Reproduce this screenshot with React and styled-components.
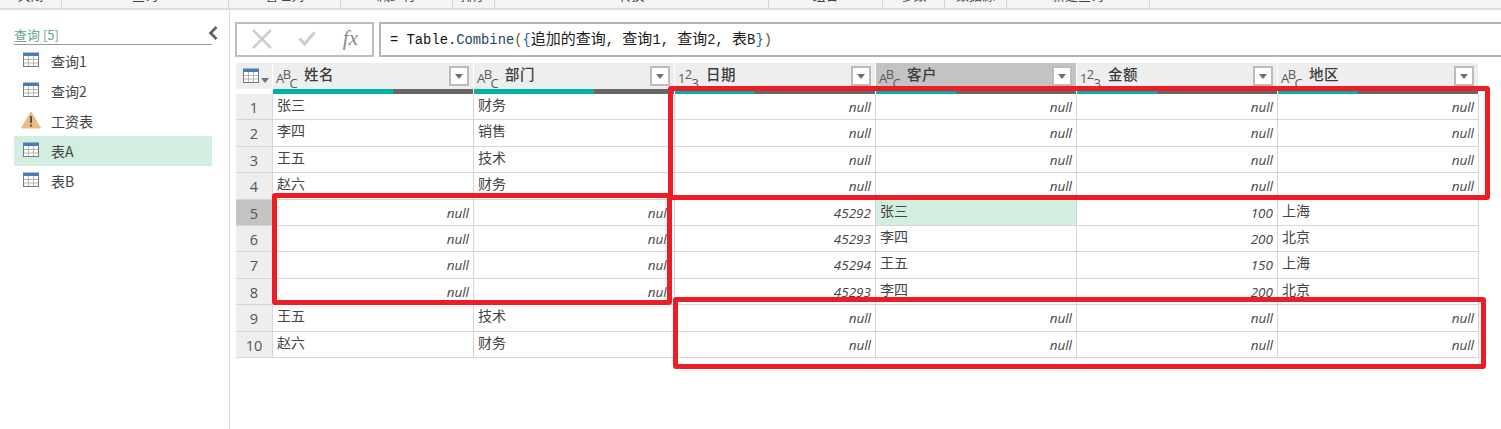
import React from 'react';
import styled, { createGlobalStyle } from 'styled-components';

const GlobalStyle = createGlobalStyle`
    html, body {
        margin: 0;
        padding: 0;
        background: #fff;
        overflow: hidden;
    }
    body {
        font-family: "Noto Sans CJK SC", "Liberation Sans", sans-serif;
        color: #444;
    }
`;

const ribbonGroups = [
    { label: '关闭', width: 62 },
    { label: '查询', width: 167 },
    { label: '管理列', width: 112 },
    { label: '减少行', width: 112 },
    { label: '排序', width: 42 },
    { label: '转换', width: 274 },
    { label: '组合', width: 114 },
    { label: '参数', width: 62 },
    { label: '数据源', width: 62 },
    { label: '新建查询', width: 143 },
];

const queries = [
    { name: '查询1', icon: 'table' },
    { name: '查询2', icon: 'table' },
    { name: '工资表', icon: 'warn' },
    { name: '表A', icon: 'table', active: true },
    { name: '表B', icon: 'table' },
];

const columns = [
    { title: '姓名', type: 'abc', fill: 120 },
    { title: '部门', type: 'abc', fill: 120 },
    { title: '日期', type: 'num', fill: 80 },
    { title: '客户', type: 'abc', fill: 80, selected: true },
    { title: '金额', type: 'num', fill: 80 },
    { title: '地区', type: 'abc', fill: 80 },
];

const n = null;
const rows = [
    ['张三', '财务', n, n, n, n],
    ['李四', '销售', n, n, n, n],
    ['王五', '技术', n, n, n, n],
    ['赵六', '财务', n, n, n, n],
    [n, n, 45292, '张三', 100, '上海'],
    [n, n, 45293, '李四', 200, '北京'],
    [n, n, 45294, '王五', 150, '上海'],
    [n, n, 45293, '李四', 200, '北京'],
    ['王五', '技术', n, n, n, n],
    ['赵六', '财务', n, n, n, n],
];

const TableIcon = ({ size = 16 }) => (
    <svg width={size} height={size} viewBox="0 0 16 16" fill="none">
        <rect x="0.5" y="1.5" width="15" height="13" fill="#fff" stroke="#7a7a7a" />
        <path d="M0 0.5h16v3.5H0z" fill="#4a7db8" />
        <path d="M5.5 4v10M10.5 4v10M1 7.5h14M1 11h14" stroke="#b5b5b5" />
    </svg>
);

const WarnIcon = () => (
    <svg width="20" height="18" viewBox="0 0 20 18">
        <path d="M10 1 L19.5 17 H0.5 Z" fill="#e8bd82" stroke="#e8bd82" strokeLinejoin="round" />
        <path d="M9 5h2v7H9z M9 13.5h2v2H9z" fill="#5c5248" />
    </svg>
);

const CollapseIcon = () => (
    <svg width="10" height="14" viewBox="0 0 10 14" fill="none">
        <path d="M8.5 1 L2.5 7 L8.5 13" stroke="#606060" strokeWidth="2.6" />
    </svg>
);

const CrossIcon = () => (
    <svg width="20" height="20" viewBox="0 0 20 20" fill="none">
        <path d="M1 1 L19 19 M19 1 L1 19" stroke="#cdcdcd" strokeWidth="2.6" />
    </svg>
);

const CheckIcon = () => (
    <svg width="18" height="15" viewBox="0 0 18 15" fill="none">
        <path d="M1.5 7.5 L6.5 13 L16.5 1.5" stroke="#cdcdcd" strokeWidth="3" />
    </svg>
);

const Caret = () => (
    <svg width="8" height="5" viewBox="0 0 8 5">
        <path d="M0 0h8L4 5z" fill="#707070" />
    </svg>
);

const TypeIcon = ({ type }) => {
    const glyphs = type === 'abc' ? ['A', 'B', 'C'] : ['1', '2', '3'];
    return (
        <TypeBadge>
            <TypeGlyph $place="center">{glyphs[0]}</TypeGlyph>
            <TypeGlyph $place="flex-start">{glyphs[1]}</TypeGlyph>
            <TypeGlyph $place="flex-end">{glyphs[2]}</TypeGlyph>
        </TypeBadge>
    );
};

const App = () => {
    return (
        <Page>
            <GlobalStyle />
            <Ribbon>
                {ribbonGroups.map((group) => (
                    <RibbonGroup key={group.label} $width={group.width}>
                        {group.label}
                    </RibbonGroup>
                ))}
            </Ribbon>
            <Body>
                <Sidebar>
                    <SideHead>
                        <SideTitle>查询 [5]</SideTitle>
                        <CollapseIcon />
                    </SideHead>
                    <QueryList>
                        {queries.map((query) => (
                            <QueryItem key={query.name} $active={query.active}>
                                <QueryIcon>
                                    {query.icon === 'warn' ? <WarnIcon /> : <TableIcon />}
                                </QueryIcon>
                                {query.name}
                            </QueryItem>
                        ))}
                    </QueryList>
                </Sidebar>
                <Main>
                    <FormulaRow>
                        <FormulaTools>
                            <CrossIcon />
                            <CheckIcon />
                            <FxMark>fx</FxMark>
                        </FormulaTools>
                        <FormulaInput>
                            = <Dark>Table</Dark>.<Fn>Combine</Fn>
                            <Paren>(</Paren>
                            <Brace>{'{'}</Brace>
                            <Cjk>追加的查询</Cjk>, <Cjk>查询</Cjk>1, <Cjk>查询</Cjk>2, <Cjk>表</Cjk>B
                            <Brace>{'}'}</Brace>
                            <Paren>)</Paren>
                        </FormulaInput>
                    </FormulaRow>
                    <TableWrap>
                        <HeaderRow>
                            <CornerCell>
                                <TableIcon />
                                <Caret />
                            </CornerCell>
                            {columns.map((col) => (
                                <HeaderCell key={col.title} $selected={col.selected}>
                                    <HeaderTop>
                                        <TypeIcon type={col.type} />
                                        <HeaderTitle>{col.title}</HeaderTitle>
                                        <FilterButton>
                                            <Caret />
                                        </FilterButton>
                                    </HeaderTop>
                                    <QualityBar>
                                        <QualityFill $width={col.fill} />
                                    </QualityBar>
                                </HeaderCell>
                            ))}
                        </HeaderRow>
                        {rows.map((row, i) => (
                            <DataRow key={i}>
                                <RowNumber $selected={i === 4}>{i + 1}</RowNumber>
                                {row.map((value, j) =>
                                    typeof value === 'string' ? (
                                        <TextCell key={j} $selected={i === 4 && j === 3}>
                                            {value}
                                        </TextCell>
                                    ) : (
                                        <ValueCell key={j}>{value === null ? 'null' : value}</ValueCell>
                                    )
                                )}
                            </DataRow>
                        ))}
                        <Frame $left={432} $top={23} $width={822} $height={114} />
                        <Frame $left={36} $top={130} $width={400} $height={112} />
                        <Frame $left={437} $top={234} $width={813} $height={72} />
                    </TableWrap>
                </Main>
            </Body>
        </Page>
    );
};

export default App;

const Page = styled.div`
    width: 1501px;
    height: 429px;
    display: flex;
    flex-direction: column;
    overflow: hidden;
`;

const Ribbon = styled.div`
    height: 8px;
    flex: none;
    display: flex;
    background: #f5f4f5;
    border-bottom: 2px solid #dcdcdc;
    overflow: hidden;
`;
const RibbonGroup = styled.div`
    width: ${(p) => p.$width}px;
    flex: none;
    height: 8px;
    display: flex;
    align-items: flex-end;
    justify-content: center;
    padding-bottom: 4px;
    box-sizing: border-box;
    border-right: 1px solid #d4d4d4;
    font-size: 13px;
    line-height: 18px;
    color: #444;
`;

const Body = styled.div`
    flex: 1;
    display: flex;
    min-height: 0;
`;

const Sidebar = styled.aside`
    width: 230px;
    flex: none;
    box-sizing: border-box;
    border-right: 1px solid #d9d9d9;
    padding: 14px 17px 0 14px;
`;
const SideHead = styled.div`
    display: flex;
    align-items: flex-start;
    justify-content: space-between;
    height: 20px;
    border-bottom: 1px solid #9a9a9a;
    svg {
        margin: 2px -6px 0 0;
    }
`;
const SideTitle = styled.div`
    font-size: 13px;
    line-height: 21px;
    color: #6aa88c;
`;
const QueryList = styled.div`
    margin-top: 1px;
`;
const QueryItem = styled.div`
    height: 30px;
    display: flex;
    align-items: center;
    font-size: 14px;
    color: #444;
    background: ${(p) => (p.$active ? '#d3eee0' : 'transparent')};
`;
const QueryIcon = styled.span`
    width: 20px;
    margin: -2px 10px 0 7px;
    flex: none;
    display: flex;
    align-items: center;
    justify-content: center;
`;

const Main = styled.main`
    flex: 1;
    min-width: 0;
    padding: 12px 0 0 5px;
`;

const FormulaRow = styled.div`
    display: flex;
    gap: 5px;
    height: 35px;
`;
const FormulaTools = styled.div`
    width: 139px;
    flex: none;
    box-sizing: border-box;
    border: 2px solid #bdbdbd;
    display: flex;
    align-items: center;
    padding: 0 14px 2px 15px;
    justify-content: space-between;
`;
const FxMark = styled.span`
    font-family: "Liberation Serif", serif;
    font-style: italic;
    font-size: 21px;
    line-height: 1;
    color: #8a8a8a;
`;
const FormulaInput = styled.div`
    flex: 1;
    min-width: 0;
    box-sizing: border-box;
    border-style: solid;
    border-color: #b4b4b4;
    border-width: 2px 0 2px 2px;
    padding-left: 9px;
    white-space: pre-wrap;
    font-family: "Liberation Mono", "Noto Sans CJK SC", monospace;
    font-size: 13.8px;
    line-height: 27px;
    color: #1a1a1a;
`;
const Dark = styled.span`
    color: #101010;
`;
const Fn = styled.span`
    color: #17495c;
`;
const Paren = styled.span`
    color: #7a5a10;
`;
const Brace = styled.span`
    color: #2a62b0;
`;
const Cjk = styled.span`
    font-family: "Noto Sans CJK SC", sans-serif;
    font-size: 15px;
`;

const TableWrap = styled.div`
    position: relative;
    margin: 6px 0 0 1px;
    width: 1243px;
`;
const HeaderRow = styled.div`
    display: grid;
    grid-template-columns: 36px repeat(6, 201px);
    height: 31px;
`;
const CornerCell = styled.div`
    background: #eeeeee;
    height: 26px;
    display: flex;
    align-items: center;
    padding-left: 7px;
    gap: 2px;
    svg:last-child {
        margin-top: 9px;
    }
`;
const HeaderCell = styled.div`
    display: flex;
    flex-direction: column;
    border-left: 1px solid #fff;
    background: ${(p) => (p.$selected ? '#c3c3c3' : '#eeeeee')};
`;
const HeaderTop = styled.div`
    height: 26px;
    display: flex;
    align-items: center;
    padding: 0 4px 0 3px;
`;
const HeaderTitle = styled.span`
    flex: 1;
    font-size: 14.5px;
    font-weight: 500;
    letter-spacing: 0.5px;
    line-height: 20px;
    margin: -4px 0 0 8px;
    color: #3c3c3c;
`;
const TypeBadge = styled.span`
    width: 20px;
    height: 21px;
    flex: none;
    display: flex;
    margin-top: 4px;
`;
const TypeGlyph = styled.span`
    align-self: ${(p) => p.$place};
    font-family: "Open Sans", sans-serif;
    font-size: 13px;
    line-height: 12px;
    color: #5a5a5a;
    width: 6.8px;
`;
const FilterButton = styled.span`
    width: 20px;
    height: 20px;
    flex: none;
    box-sizing: border-box;
    border: 2px solid #bcbcbc;
    background: #fff;
    display: flex;
    align-items: center;
    justify-content: center;
`;
const QualityBar = styled.div`
    height: 5px;
    background: #666666;
`;
const QualityFill = styled.div`
    height: 100%;
    width: ${(p) => p.$width}px;
    background: #00b3a4;
`;

const DataRow = styled.div`
    display: grid;
    grid-template-columns: 36px repeat(6, 201px);
    grid-template-rows: minmax(0, 1fr);
    height: 26.4px;
    box-sizing: border-box;
    border-bottom: 1.5px solid #d6d6d6;
    border-right: 1px solid #d6d6d6;
`;
const RowNumber = styled.div`
    background: ${(p) => (p.$selected ? '#c3c3c3' : '#eeeeee')};
    text-align: center;
    font-family: "Open Sans", sans-serif;
    font-size: 14.5px;
    line-height: 28px;
    color: #555;
`;
const TextCell = styled.div`
    border-left: 1px solid #d6d6d6;
    padding-left: 4px;
    font-size: 14px;
    line-height: 21px;
    color: #444;
    overflow: hidden;
    background: ${(p) => (p.$selected ? '#d3eee0' : '#fff')};
`;
const ValueCell = styled.div`
    border-left: 1px solid #d6d6d6;
    padding-right: 4px;
    text-align: right;
    font-family: "Open Sans", sans-serif;
    font-style: italic;
    font-size: 13.5px;
    line-height: 26px;
    color: #444;
    overflow: hidden;
`;

const Frame = styled.div`
    position: absolute;
    left: ${(p) => p.$left}px;
    top: ${(p) => p.$top}px;
    width: ${(p) => p.$width}px;
    height: ${(p) => p.$height}px;
    box-sizing: border-box;
    border: 5.5px solid #ee1c25;
    border-radius: 3px;
    pointer-events: none;
`;
